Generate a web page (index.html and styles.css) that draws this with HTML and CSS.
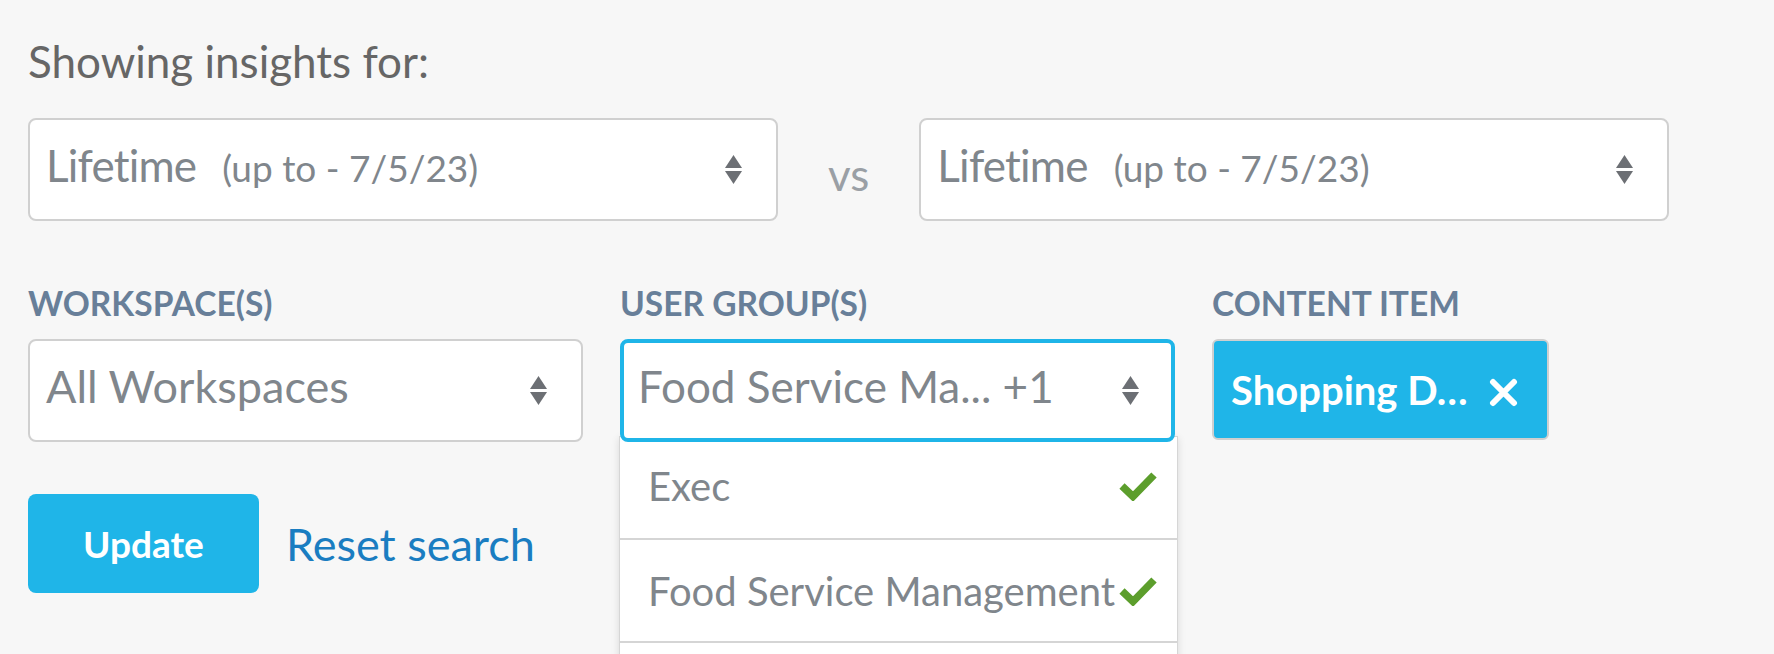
FILE: index.html
```html
<!DOCTYPE html>
<html lang="en">
<head>
    <meta charset="UTF-8">
    <meta name="viewport" content="width=device-width, initial-scale=1.0">
    <title>Insights</title>
    <link rel="stylesheet" href="styles.css">
</head>
<body>
    <div class="page">
        <h1 class="title">Showing insights for:</h1>

        <div class="compare-row">
            <div class="select period">
                <span class="select-value"><span class="period-name">Lifetime</span><span class="select-note">(up to - 7/5/23)</span></span>
                <svg class="select-arrows" width="17" height="30" viewBox="0 0 17 30"><polygon points="8.5,0 17,13 0,13"/><polygon points="0,16 17,16 8.5,29"/></svg>
            </div>
            <span class="vs">vs</span>
            <div class="select period">
                <span class="select-value"><span class="period-name">Lifetime</span><span class="select-note">(up to - 7/5/23)</span></span>
                <svg class="select-arrows" width="17" height="30" viewBox="0 0 17 30"><polygon points="8.5,0 17,13 0,13"/><polygon points="0,16 17,16 8.5,29"/></svg>
            </div>
        </div>

        <div class="filter-row">
            <div class="field">
                <label class="field-label">WORKSPACE(S)</label>
                <div class="select">
                    <span class="select-value">All Workspaces</span>
                    <svg class="select-arrows" width="17" height="30" viewBox="0 0 17 30"><polygon points="8.5,0 17,13 0,13"/><polygon points="0,16 17,16 8.5,29"/></svg>
                </div>
            </div>
            <div class="field">
                <label class="field-label">USER GROUP(S)</label>
                <div class="select focused">
                    <span class="select-value">Food Service Ma... +1</span>
                    <svg class="select-arrows" width="17" height="30" viewBox="0 0 17 30"><polygon points="8.5,0 17,13 0,13"/><polygon points="0,16 17,16 8.5,29"/></svg>
                </div>
                <ul class="dropdown">
                    <li class="dropdown-item">Exec
                        <svg class="check" width="38" height="30" viewBox="0 0 38 30"><polyline points="3,15 14,25.5 35,4"/></svg>
                    </li>
                    <li class="dropdown-item">Food Service Management
                        <svg class="check" width="38" height="30" viewBox="0 0 38 30"><polyline points="3,15 14,25.5 35,4"/></svg>
                    </li>
                    <li class="dropdown-item"></li>
                </ul>
            </div>
            <div class="field">
                <label class="field-label">CONTENT ITEM</label>
                <div class="chip">
                    <span>Shopping D…</span>
                    <svg class="chip-close" width="29" height="29" viewBox="0 0 29 29"><path d="M4 4 L25 25 M25 4 L4 25"/></svg>
                </div>
            </div>
        </div>

        <div class="actions">
            <button class="update-btn">Update</button>
            <a class="reset-link" href="#">Reset search</a>
        </div>
    </div>
</body>
</html>
```

FILE: styles.css
```css
html, body {
    margin: 0;
    padding: 0;
    height: 100%;
    overflow: hidden;
}
body {
    font-family: Lato, "Open Sans", sans-serif;
    font-variant-ligatures: none;
    background-color: #f7f7f7;
}
.page {
    padding: 35px 28px 0;
}
.title {
    margin: 0 0 31px;
    font-size: 44px;
    line-height: 52px;
    font-weight: normal;
    color: #666;
}
.compare-row {
    display: flex;
    align-items: center;
}
.select {
    box-sizing: border-box;
    height: 103px;
    display: flex;
    align-items: center;
    padding: 0 34px 10px 16px;
    background: #fff;
    border: 2px solid #d0d0d0;
    border-radius: 8px;
    color: #80868c;
    font-size: 45px;
}
.period {
    width: 750px;
    font-size: 44px;
}
.period-name {
    letter-spacing: -0.8px;
}
.select-value {
    flex: 1;
    white-space: nowrap;
}
.select-note {
    margin-left: 26px;
    font-size: 37px;
}
.select-arrows {
    fill: #6c6f74;
    margin-top: 10px;
}
.vs {
    margin: 0 50px;
    font-size: 44px;
    color: #9a9fa5;
    padding-top: 8px;
}
.filter-row {
    display: flex;
    gap: 37px;
    margin-top: 62px;
}
.field {
    position: relative;
    display: flex;
    flex-direction: column;
}
.field .select {
    width: 555px;
}
.field-label {
    margin-bottom: 16px;
    font-size: 33.5px;
    line-height: 40px;
    font-weight: bold;
    color: #687f99;
}
.select.focused {
    border: 4px solid #1fb5e8;
    padding-left: 14px;
    padding-right: 32px;
    font-size: 44px;
    position: relative;
    z-index: 2;
}
.dropdown {
    position: absolute;
    top: calc(100% - 6px);
    left: -1px;
    width: 559px;
    margin: 0;
    padding: 0;
    list-style: none;
    background: #fff;
    border: 1px solid #d6d6d6;
    box-sizing: border-box;
    box-shadow: 0 2px 8px rgba(0, 0, 0, 0.12);
    z-index: 1;
}
.dropdown-item {
    display: flex;
    align-items: center;
    justify-content: space-between;
    box-sizing: border-box;
    height: 103px;
    padding: 0 20px 0 28px;
    border-bottom: 2px solid #d5d5d5;
    font-size: 40px;
    color: #80868c;
}
.dropdown-item:first-child {
    padding-bottom: 4px;
}
.check {
    fill: none;
    stroke: #5c9e2c;
    stroke-width: 7.5;
}
.chip {
    box-sizing: border-box;
    height: 101px;
    width: 337px;
    display: flex;
    align-items: center;
    justify-content: space-between;
    padding: 0 29px 0 17px;
    background: #1fb5e8;
    border: 2px solid #cfcfcf;
    border-radius: 6px;
    color: #fff;
    font-size: 40px;
    font-weight: bold;
}
.chip-close {
    stroke: #fff;
    stroke-width: 6;
    stroke-linecap: round;
    margin-top: 6px;
}
.actions {
    display: flex;
    align-items: center;
    margin-top: 52px;
}
.update-btn {
    width: 231px;
    height: 99px;
    background-color: #1fb5e8;
    color: #fff;
    border: none;
    border-radius: 8px;
    font-family: inherit;
    font-size: 37px;
    font-weight: bold;
    cursor: pointer;
}
.reset-link {
    margin-left: 27px;
    font-size: 45px;
    color: #1a7dc1;
    text-decoration: none;
}
```
